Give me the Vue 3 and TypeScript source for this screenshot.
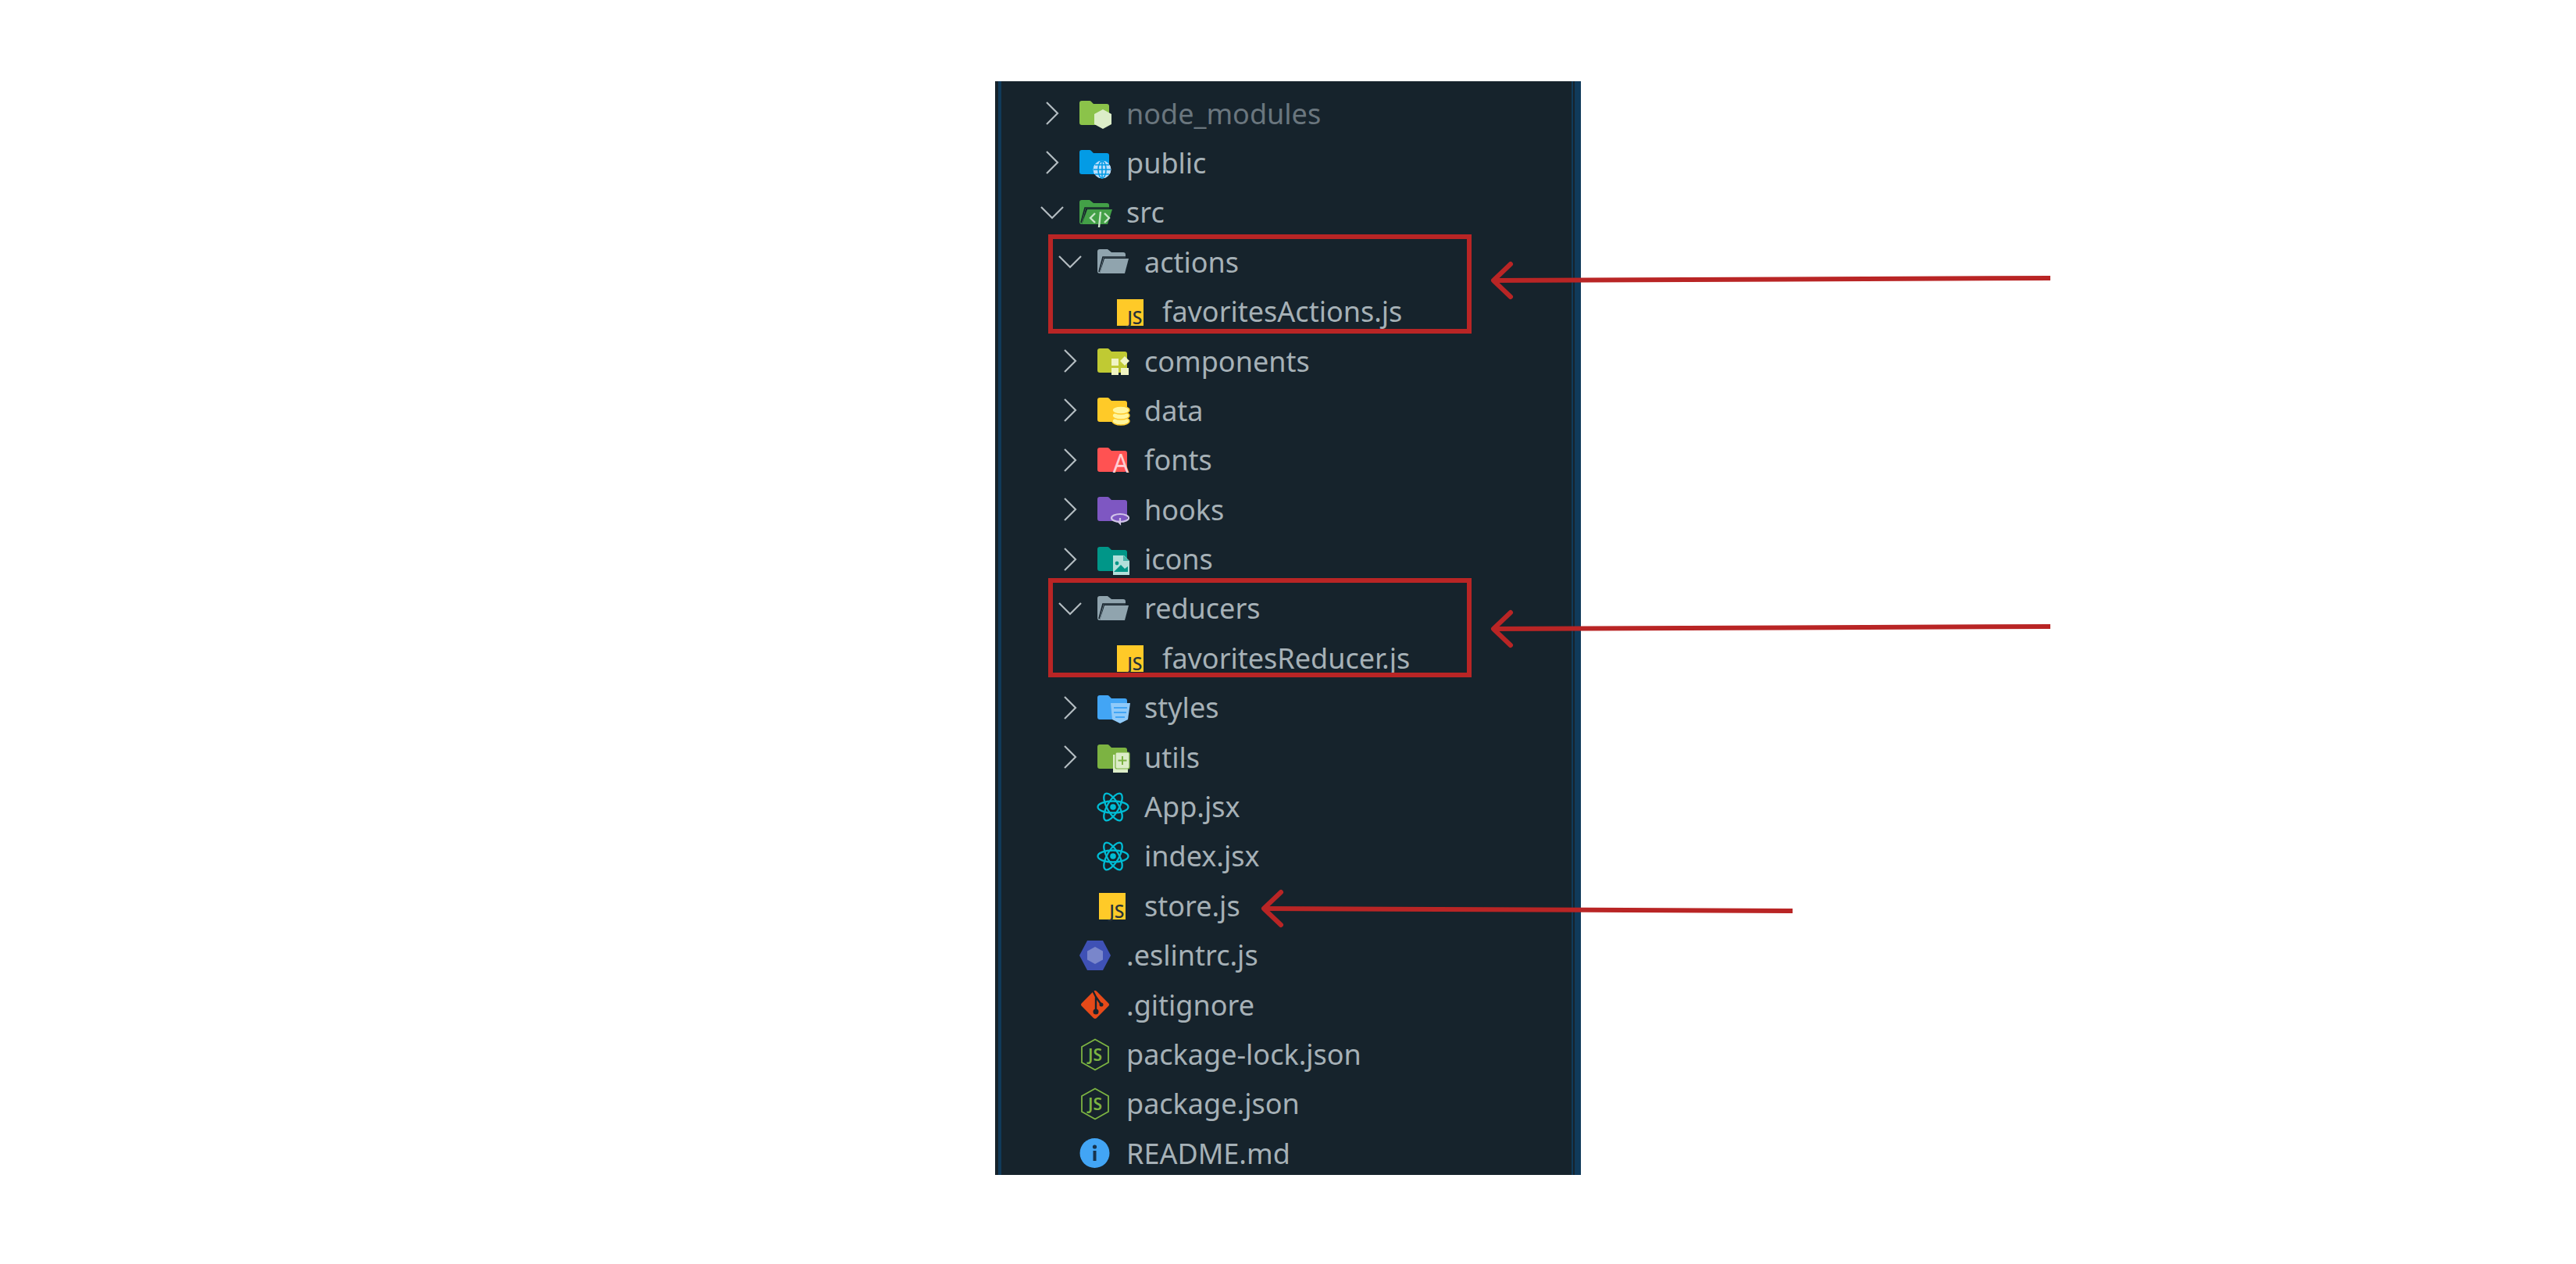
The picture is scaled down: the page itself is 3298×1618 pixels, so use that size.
<script setup lang="ts">
type Row = {
  name: string;
  depth: number;
  twist?: "open" | "closed";
  icon: string;
  dim?: boolean;
};

const rows: Row[] = [
  { name: "node_modules", depth: 0, twist: "closed", icon: "node", dim: true },
  { name: "public", depth: 0, twist: "closed", icon: "public" },
  { name: "src", depth: 0, twist: "open", icon: "src" },
  { name: "actions", depth: 1, twist: "open", icon: "open" },
  { name: "favoritesActions.js", depth: 2, icon: "js" },
  { name: "components", depth: 1, twist: "closed", icon: "components" },
  { name: "data", depth: 1, twist: "closed", icon: "data" },
  { name: "fonts", depth: 1, twist: "closed", icon: "fonts" },
  { name: "hooks", depth: 1, twist: "closed", icon: "hooks" },
  { name: "icons", depth: 1, twist: "closed", icon: "images" },
  { name: "reducers", depth: 1, twist: "open", icon: "open" },
  { name: "favoritesReducer.js", depth: 2, icon: "js" },
  { name: "styles", depth: 1, twist: "closed", icon: "styles" },
  { name: "utils", depth: 1, twist: "closed", icon: "utils" },
  { name: "App.jsx", depth: 1, icon: "react" },
  { name: "index.jsx", depth: 1, icon: "react" },
  { name: "store.js", depth: 1, icon: "js" },
  { name: ".eslintrc.js", depth: 0, icon: "eslint" },
  { name: ".gitignore", depth: 0, icon: "git" },
  { name: "package-lock.json", depth: 0, icon: "nodejs" },
  { name: "package.json", depth: 0, icon: "nodejs" },
  { name: "README.md", depth: 0, icon: "info" },
];

const folderColors: Record<string, string> = {
  node: "#8bc34a",
  public: "#039be5",
  components: "#c0ca33",
  data: "#ffca28",
  fonts: "#ff5252",
  hooks: "#7e57c2",
  images: "#009688",
  styles: "#42a5f5",
  utils: "#7cb342",
};

const folderPath =
  "M3 5h10a3 3 0 0 1 2 1l3 3h17a3 3 0 0 1 3 3v21a3 3 0 0 1-3 3H3a3 3 0 0 1-3-3V8a3 3 0 0 1 3-3z";
</script>

<template>
  <div class="page">
    <div class="explorer">
      <div
        v-for="row in rows"
        :key="row.name"
        class="row"
        :class="{ dim: row.dim }"
        :style="{ paddingLeft: `${46 + row.depth * 23}px` }"
      >
        <span class="twist">
          <svg v-if="row.twist === 'closed'" width="38" height="38" viewBox="0 0 38 38">
            <path d="M12 5l14 14-14 14" fill="none" stroke="#b3bcc1" stroke-width="2.2" />
          </svg>
          <svg v-else-if="row.twist === 'open'" width="38" height="38" viewBox="0 0 38 38">
            <path d="M5 12l14 14 14-14" fill="none" stroke="#b3bcc1" stroke-width="2.2" />
          </svg>
        </span>

        <svg class="icon" width="42" height="42" viewBox="0 0 42 42">
          <path v-if="folderColors[row.icon]" :d="folderPath" :fill="folderColors[row.icon]" />

          <polygon
            v-if="row.icon === 'node'"
            points="30,16 41,22 41,35 30,41 19,35 19,22"
            fill="#dcedc8"
          />

          <g v-else-if="row.icon === 'public'" fill="none" stroke="#bbdefb">
            <circle cx="29" cy="30" r="11" fill="#bbdefb" />
            <g stroke="#039be5" stroke-width="1.6">
              <ellipse cx="29" cy="30" rx="5" ry="11" />
              <path d="M18 30h22M20 24h18M20 36h18M29 19v22" />
            </g>
          </g>

          <g v-else-if="row.icon === 'src'">
            <path d="M3 5h10l5 4h17a3 3 0 0 1 3 3v4H8l-5 20a3 3 0 0 1-3-3V8a3 3 0 0 1 3-3z" fill="#43a047" />
            <path d="M10 17h32l-6 19H3z" fill="#43a047" />
            <path d="M2 34L7 15h31" fill="none" stroke="#17232d" stroke-width="1.6" />
            <path
              d="M20 22l-6 6 6 6M32 22l6 6-6 6M27 20l-2 20"
              fill="none"
              stroke="#c8e6c9"
              stroke-width="2.4"
            />
          </g>

          <g v-else-if="row.icon === 'open'">
            <path d="M3 5h10l5 4h15a3 3 0 0 1 3 3v4H8l-5 20a3 3 0 0 1-3-3V8a3 3 0 0 1 3-3z" fill="#90a4ae" />
            <path d="M9 17h31l-5 19H3z" fill="#90a4ae" />
            <path d="M2 34L7 15h31" fill="none" stroke="#17232d" stroke-width="1.6" />
          </g>

          <g v-else-if="row.icon === 'js'">
            <rect x="2" y="5" width="34" height="34" fill="#ffca28" />
            <text x="34.500" y="37" class="js-mark" text-anchor="end">JS</text>
          </g>

          <g v-else-if="row.icon === 'components'" fill="#f0f4c3">
            <rect x="18" y="18" width="9" height="9" />
            <rect x="18" y="30" width="9" height="9" />
            <rect x="30" y="30" width="10" height="9" />
            <polygon points="35,15 41,21 35,27 29,21" />
          </g>

          <g v-else-if="row.icon === 'data'" fill="#fff59d" stroke="#ffca28" stroke-width="1.4">
            <ellipse cx="30" cy="35" rx="11" ry="5" />
            <ellipse cx="30" cy="28" rx="11" ry="5" />
            <ellipse cx="30" cy="21" rx="11" ry="5" />
          </g>

          <text v-else-if="row.icon === 'fonts'" x="30" y="37" class="a-mark" text-anchor="middle">A</text>

          <g v-else-if="row.icon === 'hooks'" fill="none" stroke="#d1c4e9" stroke-width="2.2">
            <ellipse cx="29" cy="32" rx="11" ry="5" />
            <path d="M29 32v7l-3-3" />
          </g>

          <g v-else-if="row.icon === 'images'">
            <path d="M20 16h14l7 7v18H20z" fill="#b2dfdb" />
            <circle cx="25" cy="26" r="2.4" fill="#009688" />
            <path d="M21 37l9-9 5 5 4-3v7z" fill="#009688" />
            <path d="M33 16l8 7h-8z" fill="#009688" opacity="0.6" />
          </g>

          <g v-else-if="row.icon === 'styles'">
            <path d="M17 15h25l-3 21-10 5-10-5z" fill="#90caf9" />
            <path d="M21 21h17M21 27h16M23 33h12" stroke="#42a5f5" stroke-width="2.2" />
          </g>

          <g v-else-if="row.icon === 'utils'">
            <rect x="20" y="18" width="19" height="23" fill="#dcedc8" />
            <rect x="23" y="15" width="18" height="21" rx="2" fill="#dcedc8" stroke="#7cb342" stroke-width="1.2" />
            <path d="M32 20v11M26.500 25.500h11" stroke="#7cb342" stroke-width="2" />
          </g>

          <g v-else-if="row.icon === 'react'" fill="none" stroke="#00bcd4" stroke-width="2.300">
            <ellipse cx="20" cy="21" rx="19.500" ry="7.500" />
            <ellipse cx="20" cy="21" rx="19.500" ry="7.500" transform="rotate(60 20 21)" />
            <ellipse cx="20" cy="21" rx="19.500" ry="7.500" transform="rotate(120 20 21)" />
            <circle cx="20" cy="21" r="3.800" fill="#00bcd4" stroke="none" />
          </g>

          <g v-else-if="row.icon === 'eslint'">
            <polygon points="10,2 30,2 40,21 30,40 10,40 0,21" fill="#3f51b5" />
            <polygon points="20,10 30,15.500 30,26.500 20,32 10,26.500 10,15.500" fill="#7986cb" />
          </g>

          <g v-else-if="row.icon === 'git'">
            <rect x="6.500" y="7.500" width="27" height="27" rx="3" transform="rotate(45 20 21)" fill="#e64a19" />
            <path d="M17 3l4 8M21 11v19M21 11l7 10" stroke="#17232d" stroke-width="2.400" fill="none" />
            <circle cx="21" cy="30" r="3.500" fill="#17232d" />
            <circle cx="28" cy="21" r="2.500" fill="#17232d" />
          </g>

          <g v-else-if="row.icon === 'nodejs'">
            <polygon
              points="20,1.500 37,11 37,31 20,40.500 3,31 3,11"
              fill="none"
              stroke="#7cb342"
              stroke-width="1.800"
            />
            <text x="20" y="28.500" class="node-mark" text-anchor="middle">JS</text>
          </g>

          <g v-else-if="row.icon === 'info'">
            <circle cx="19.500" cy="21" r="19" fill="#42a5f5" />
            <circle cx="19.500" cy="13" r="2.600" fill="#17334d" />
            <rect x="17.500" y="18" width="4" height="13" fill="#17334d" />
          </g>
        </svg>

        <span class="label">{{ row.name }}</span>
      </div>
    </div>

    <svg class="marks" width="3298" height="1618" viewBox="0 0 3298 1618">
      <g fill="none" stroke="#b92525" stroke-width="6">
        <rect x="1345" y="303" width="536" height="121" />
        <rect x="1345" y="743" width="536" height="121" />
      </g>
      <g fill="none" stroke="#b92525" stroke-width="6">
        <path d="M1934 338l-22 21 22 21" stroke-linecap="round" stroke-linejoin="round" />
        <path d="M1912 359L2625 356" />
        <path d="M1934 784l-22 21 22 21" stroke-linecap="round" stroke-linejoin="round" />
        <path d="M1912 805L2625 802" />
        <path d="M1640 1142l-22 21 22 21" stroke-linecap="round" stroke-linejoin="round" />
        <path d="M1618 1163L2295 1166" />
      </g>
    </svg>
  </div>
</template>

<style scoped>
.page {
  position: relative;
  width: 3298px;
  height: 1618px;
  padding: 104px 0 0 1274px;
  box-sizing: border-box;
  overflow: hidden;
  background: #fff;
}

.explorer {
  width: 750px;
  height: 1400px;
  box-sizing: border-box;
  padding: 9.400px 12px 0 8px;
  overflow: hidden;
  /* thin editor borders down both edges of the panel */
  background: linear-gradient(
    to right,
    #16232c 0 4px,
    #103a5a 4px 8px,
    #16232c 8px 738px,
    #103a5a 738px 740px,
    #16232c 740px 742px,
    #103a5a 742px 750px
  );
  font-family: "Noto Sans", sans-serif;
  font-size: 36px;
  color: #a6b1b7;
}

.row {
  display: flex;
  align-items: center;
  height: 63.400px;
  white-space: nowrap;
}

.dim .label {
  color: #6a767e;
}

.twist {
  display: flex;
  flex: none;
  width: 38px;
  height: 38px;
  margin-right: 16px;
}

.icon {
  flex: none;
  margin-right: 18px;
  overflow: visible;
}

.js-mark {
  font: 500 23px "Noto Sans", sans-serif;
  fill: #263238;
}

.a-mark {
  font: 400 32px "Noto Sans", sans-serif;
  fill: #ffcdd2;
}

.node-mark {
  font: 600 21px "Noto Sans", sans-serif;
  fill: #7cb342;
}

.marks {
  position: absolute;
  top: 0;
  left: 0;
  pointer-events: none;
}
</style>

<style>
body {
  margin: 0;
}
</style>
